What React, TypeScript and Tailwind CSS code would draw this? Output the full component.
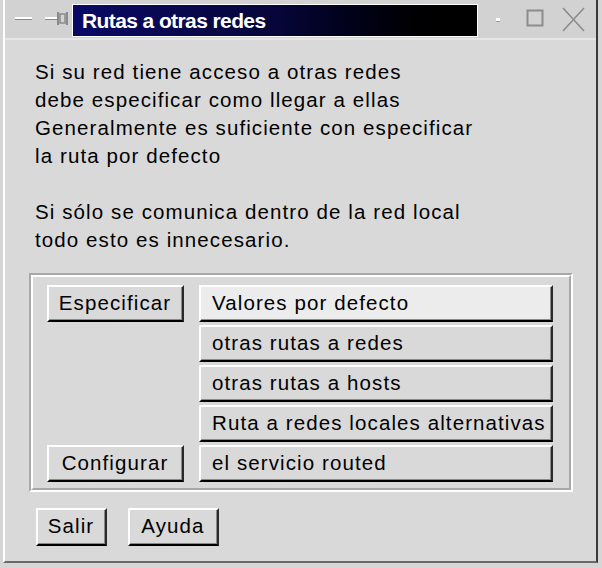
import React from "react";

const font = { fontFamily: '"Liberation Sans", Arial, sans-serif' };

function Btn({ children, className = "", light = false }: { children: React.ReactNode; className?: string; light?: boolean }) {
  return (
    <div
      className={`flex items-center border-t-2 border-l-2 border-t-white border-l-white border-b-2 border-r-2 border-b-black border-r-[#2a2a2a] ${light ? "bg-[#ececec]" : "bg-[#d9d9d9]"} ${className}`}
    >
      <div className="flex h-full w-full items-center border-b border-r border-b-[#8a8a8a] border-r-[#8a8a8a]">{children}</div>
    </div>
  );
}

export default function App() {
  const lines = [
    "Si su red tiene acceso a otras redes",
    "debe especificar como llegar a ellas",
    "Generalmente es suficiente con especificar",
    "la ruta por defecto",
    "\u00a0",
    "Si sólo se comunica dentro de la red local",
    "todo esto es innecesario.",
  ];
  const routes = [
    "Valores por defecto",
    "otras rutas a redes",
    "otras rutas a hosts",
    "Ruta a redes locales alternativas",
    "el servicio routed",
  ];
  return (
    <div className="h-[568px] w-[602px] overflow-hidden bg-[#d6d6d6] text-black" style={font}>
      <div className="ml-[3px] flex h-[563px] w-[595px] flex-col border-l-2 border-r-2 border-b-2 border-l-white border-r-[#3a3a3a] border-b-[#6a6a6a] bg-[#d9d9d9]">
        {/* title bar */}
        <div className="flex h-[38px] items-end bg-[#d2d2d2] pb-[1px]">
          <div className="flex h-[33px] w-[67px] items-center">
            <svg width="67" height="33" viewBox="0 0 67 33">
              <rect x="10" y="13" width="17" height="2" fill="#ffffff" />
              <rect x="10" y="15" width="17" height="1" fill="#8a8a8a" />
              <rect x="40" y="13" width="12" height="2" fill="#ffffff" />
              <rect x="40" y="15" width="12" height="1" fill="#8a8a8a" />
              <rect x="52" y="8" width="2" height="13" fill="#8a8a8a" />
              <rect x="55" y="10" width="5" height="9" fill="none" stroke="#8a8a8a" strokeWidth="1.5" />
              <rect x="61" y="8" width="2" height="13" fill="#8a8a8a" />
            </svg>
          </div>
          <div className="flex h-[33px] w-[408px] items-center border border-white bg-gradient-to-r from-[#0a0a66] via-[#06063a] to-black pl-[9px]">
            <span className="text-[21px] font-bold tracking-[-0.6px] text-white">
              Rutas a otras redes
            </span>
          </div>
          <div className="flex h-[33px] flex-1 items-center">
            <svg width="118" height="33" viewBox="0 0 118 33">
              <rect x="18" y="14" width="4" height="3" fill="#ffffff" />
              <rect x="18" y="17" width="4" height="1" fill="#9a9a9a" />
              <rect x="49.5" y="6.5" width="15" height="15" fill="none" stroke="#8c8c8c" strokeWidth="2" />
              <path d="M85 4 L106 27 M106 4 L85 27" stroke="#8c8c8c" strokeWidth="1.6" />
            </svg>
          </div>
        </div>
        <div className="h-[2px] bg-[#e6e6e6]" />

        {/* message */}
        <div className="pl-[30px] pt-[18px] text-[20.5px] leading-[28px] tracking-[1.1px]">
          {lines.map((l, i) => (
            <div key={i}>{l}</div>
          ))}
        </div>

        {/* groove frame */}
        <div className="ml-[24px] mt-[19px] w-[544px] border-t-2 border-l-2 border-b-2 border-r-2 border-t-[#a8a8a8] border-l-[#a8a8a8] border-b-white border-r-white">
          <div className="border-t-2 border-l-2 border-b-2 border-r-2 border-t-white border-l-white border-b-[#a8a8a8] border-r-[#a8a8a8] pl-[14px] pr-[14px] pt-[8px] pb-[6px]">
            <div className="grid grid-cols-[137px_354px] grid-rows-[37px_37px_37px_37px_37px] gap-x-[15px] gap-y-[3px] text-[20.5px] tracking-[1.1px]">
              <Btn className="col-start-1 row-start-1">
                <span className="w-full text-center">Especificar</span>
              </Btn>
              <Btn className="col-start-1 row-start-5">
                <span className="w-full text-center">Configurar</span>
              </Btn>
              {routes.map((r, i) => (
                <Btn key={r} light={i === 0} className={`col-start-2 ${["row-start-1", "row-start-2", "row-start-3", "row-start-4", "row-start-5"][i]}`}>
                  <span className="pl-[11px] whitespace-nowrap">{r}</span>
                </Btn>
              ))}
            </div>
          </div>
        </div>

        {/* bottom buttons */}
        <div className="ml-[31px] mt-[16px] flex gap-[21px] text-[20.5px] tracking-[1.1px]">
          <Btn className="h-[38px] w-[71px]">
            <span className="w-full text-center">Salir</span>
          </Btn>
          <Btn className="h-[38px] w-[91px]">
            <span className="w-full text-center">Ayuda</span>
          </Btn>
        </div>
      </div>
    </div>
  );
}
